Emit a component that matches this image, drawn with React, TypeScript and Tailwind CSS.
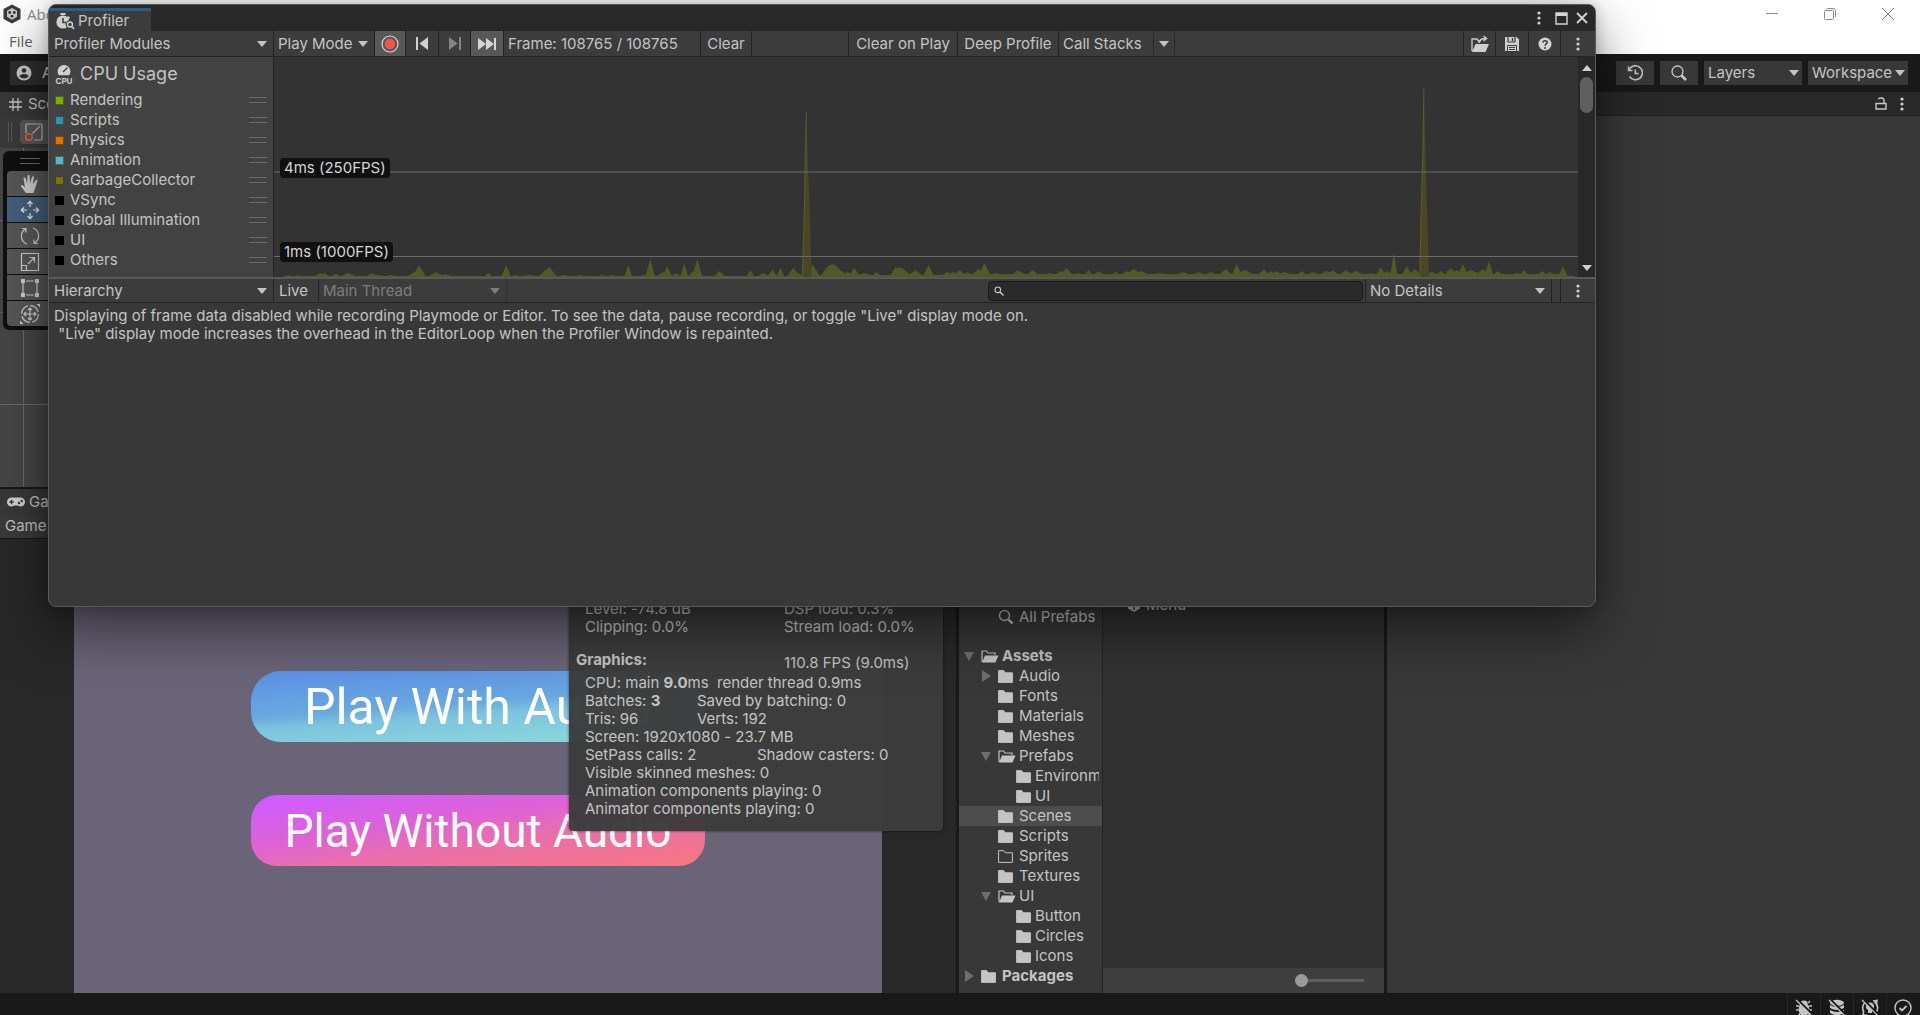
import React from "react";

const clsText = "text-[#c4c4c4]";

function Tri({ dir = "down", className = "" }: { dir?: "down" | "right" | "up"; className?: string }) {
  const d = dir === "down" ? "M0 0H10L5 6Z" : dir === "up" ? "M0 6H10L5 0Z" : "M0 0L9 6L0 12Z";
  return (
    <svg
      aria-hidden
      viewBox={dir === "right" ? "0 0 9 12" : "0 0 10 6"}
      preserveAspectRatio="none"
      className={`shrink-0 ${dir === "right" ? "h-3 w-[9px]" : "h-[6px] w-[10px]"} ${className}`}
      fill="currentColor"
    >
      <path d={d} />
    </svg>
  );
}

function Drop({
  label,
  name,
  className = "",
  arrow = "right-[6px]",
  pad = "pl-1",
  disabled = false,
}: {
  label: string;
  name: string;
  className?: string;
  arrow?: string;
  pad?: string;
  disabled?: boolean;
}) {
  return (
    <div className={`relative flex shrink-0 items-center ${disabled ? "text-[#7c7c7c]" : clsText} ${className}`}>
      <select
        aria-label={name}
        disabled={disabled}
        className={`h-full w-full appearance-none bg-transparent pr-4 outline-none ${pad}`}
      >
        <option>{label}</option>
      </select>
      <Tri className={`pointer-events-none absolute top-1/2 -translate-y-1/2 ${arrow}`} />
    </div>
  );
}

function Dots() {
  return (
    <svg aria-hidden viewBox="0 0 4 14" className="h-[14px] w-1" fill="#d0d0d0">
      <circle cx="2" cy="2" r="1.6" />
      <circle cx="2" cy="7" r="1.6" />
      <circle cx="2" cy="12" r="1.6" />
    </svg>
  );
}

function ToolBtn({
  label,
  className = "",
  children,
}: {
  label?: string;
  className?: string;
  children: React.ReactNode;
}) {
  return (
    <button
      aria-label={label}
      className={`flex h-full shrink-0 items-center justify-center border-r border-[#232323] ${className}`}
    >
      {children}
    </button>
  );
}

/* ---------- Profiler chart ---------- */

const peaks: [number, number, number][] = [
  [14, 2, 5], [24, 2, 4], [46, 4, 7], [50, 4, 6], [62, 3, 6], [74, 4, 9], [98, 4, 7], [105, 2, 9], [117, 2, 9],
  [145, 12, 7], [140, 5, 8], [162, 5, 9], [171, 3, 9], [200, 1, 14], [214, 4, 5], [232, 12, 5], [241, 2, 6],
  [255, 2, 12], [275, 10, 8], [271, 7, 7], [290, 2, 12], [306, 2, 8], [328, 2, 7], [338, 2, 8], [354, 12, 4],
  [370, 2, 8], [376, 18, 5], [393, 11, 5], [389, 5, 8], [402, 4, 6], [410, 14, 4], [423, 18, 5], [420, 7, 7],
  [445, 6, 6], [465, 1, 9], [476, 7, 4], [489, 4, 7], [498, 8, 5], [506, 9, 4], [519, 9, 7], [524, 4, 7],
  [537, 10, 5], [567, 6, 10], [573, 5, 10], [580, 9, 6], [590, 4, 12], [602, 5, 6], [621, 10, 6], [627, 8, 12],
  [641, 7, 9], [654, 12, 6], [673, 5, 9], [679, 5, 12], [685, 7, 8], [693, 5, 8], [710, 14, 7], [704, 8, 10],
  [722, 4, 16], [743, 7, 8], [746, 6, 7], [758, 7, 8], [775, 4, 12], [792, 9, 8], [786, 6, 9], [804, 4, 9],
  [814, 7, 6], [824, 6, 8], [841, 6, 5], [852, 6, 8], [859, 8, 12], [866, 6, 14], [885, 4, 18], [905, 4, 12],
  [909, 5, 12], [924, 5, 10], [936, 5, 10], [951, 8, 9], [962, 13, 6], [970, 7, 15], [989, 8, 8], [996, 6, 9],
  [1002, 6, 9], [1010, 5, 14], [1027, 6, 7], [1038, 5, 12], [1052, 6, 12], [1058, 7, 8], [1071, 7, 9],
  [1081, 6, 13], [1096, 4, 9], [1106, 10, 6], [1112, 6, 9], [1119, 24, 4], [1132, 11, 6], [1140, 8, 8],
  [1157, 6, 7], [1166, 6, 8], [1176, 9, 9], [1182, 7, 9], [1188, 13, 6], [1196, 7, 16], [1214, 16, 5],
  [1208, 8, 10], [1223, 6, 7], [1242, 4, 12], [1249, 7, 6], [1267, 6, 7], [1275, 5, 9], [1288, 11, 5],
];

function Chart() {
  const d = peaks.map(([x, h, w]) => `M${x - w} 219L${x} ${219 - h}L${x + w} 219Z`).join("");
  return (
    <svg
      role="img"
      aria-label="CPU usage chart"
      viewBox="0 0 1303 219"
      preserveAspectRatio="none"
      className="absolute inset-0 h-full w-full"
    >
      <g fill="#4f5a26">
        <path d={d} />
        <path d="M545 219L552 210Q557 204 562 208L572 219Z" />
        <path d="M615 219L620 211Q625 208 629 211L638 219Z" />
        <path d="M10 219V218H560V217H690L700 216H860L900 216L1000 216H1160L1200 216H1290V218H1300V219Z" />
        <path d="M536 215L538 206L546 219H536Z" />
      </g>
      <path d="M528 219L530 150L531 90L532 55L534 120L536 170L537 219Z" fill="#4b4724" />
      <path d="M1145 219L1146 165L1148 95L1149 30L1151 110L1153 180L1154 219Z" fill="#4b4724" />
      <path d="M528 219L530 150L531 90L532 55" fill="none" stroke="#58602a" />
      <path d="M1145 219L1146 165L1148 95L1149 30" fill="none" stroke="#58602a" />
      <path d="M0 114.5H1303M0 198.5H1303" stroke="#6b6b6b" />
    </svg>
  );
}

const modules: [string, string][] = [
  ["Rendering", "bg-[#82a80d]"],
  ["Scripts", "bg-[#3790ab]"],
  ["Physics", "bg-[#d87408]"],
  ["Animation", "bg-[#5fb3bd]"],
  ["GarbageCollector", "bg-[#77720f]"],
  ["VSync", "bg-black"],
  ["Global Illumination", "bg-black"],
  ["UI", "bg-black"],
  ["Others", "bg-black"],
];

function Profiler() {
  return (
    <section
      aria-label="Profiler"
      className="absolute top-1 right-[324px] bottom-[408px] left-12 z-20 flex flex-col overflow-hidden rounded-lg border border-[#5a5a5a] bg-[#383838] shadow-[0_22px_56px_rgba(0,0,0,0.52),0_0_14px_rgba(0,0,0,0.2)]"
    >
      <div className="flex h-[26px] shrink-0 items-end justify-between bg-[#282828]">
        <button className="flex h-[23px] w-[102px] items-center gap-[3px] border-t-3 border-[#2c5d87] bg-[#3c3c3c] pl-[6px]">
          <svg aria-hidden viewBox="0 0 20 18" className="h-[18px] w-5">
            <circle cx="8" cy="10" r="6.6" fill="#cfcfcf" />
            <path d="M5.5 1H10.5V3H5.5Z M13 4L15 5.5L14 7L12 5Z" fill="#cfcfcf" />
            <path d="M8 6V10.5H11" fill="none" stroke="#3c3c3c" strokeWidth="1.6" />
            <circle cx="15" cy="12.5" r="4.4" fill="#3c3c3c" />
            <circle cx="15" cy="12.5" r="2.5" fill="none" stroke="#cfcfcf" strokeWidth="1.4" />
            <path d="M17 14.5L19 17" stroke="#cfcfcf" strokeWidth="1.6" />
          </svg>
          <span>Profiler</span>
        </button>
        <div className="flex h-full items-center gap-2 pr-[7px]">
          <button aria-label="Window menu" className="flex w-4 justify-center"><Dots /></button>
          <button aria-label="Maximize">
            <svg viewBox="0 0 13 13" className="h-[13px] w-[13px]">
              <path d="M1 1H12V12H1Z" fill="none" stroke="#d4d4d4" strokeWidth="1.4" />
              <path d="M1 1H12V4H1Z" fill="#d4d4d4" />
            </svg>
          </button>
          <button aria-label="Close">
            <svg viewBox="0 0 12 12" className="h-3 w-3">
              <path d="M1 1L11 11M11 1L1 11" stroke="#d4d4d4" strokeWidth="1.8" />
            </svg>
          </button>
        </div>
      </div>

      <div className="flex h-[26px] shrink-0 items-stretch border-b border-[#232323] bg-[#3c3c3c]">
        <Drop name="Modules" label="Profiler Modules" pad="pl-[5px]" className="w-[225px] border-r border-[#232323]" />
        <Drop name="Target" label="Play Mode" className="w-[101px] border-r border-[#232323]" />
        <ToolBtn label="Record" className="w-[31px] bg-[#585858]">
          <svg viewBox="0 0 18 18" className="h-[18px] w-[18px]">
            <circle cx="9" cy="9" r="8" fill="none" stroke="#d8d8d8" strokeWidth="1.2" />
            <circle cx="9" cy="9" r="5.2" fill="#ff5045" />
          </svg>
        </ToolBtn>
        <ToolBtn label="Previous frame" className="w-[33px]">
          <svg viewBox="0 0 14 13" className="h-[13px] w-[14px]" fill="#d0d0d0">
            <path d="M1 0H3V13H1ZM13 0V13L4.500 6.500Z" />
          </svg>
        </ToolBtn>
        <ToolBtn label="Next frame" className="w-8">
          <svg viewBox="0 0 14 13" className="h-[13px] w-[14px]" fill="#858585">
            <path d="M11 0H13V13H11ZM1 0V13L9.500 6.500Z" />
          </svg>
        </ToolBtn>
        <ToolBtn label="Current frame" className="w-[33px] bg-[#585858]">
          <svg viewBox="0 0 18 12" className="h-3 w-[18px]" fill="#d6d6d6">
            <path d="M0 0V12L8 6ZM8 0V12L16 6ZM16 0H18V12H16Z" />
          </svg>
        </ToolBtn>
        <div className="flex w-[197px] shrink-0 items-center border-r border-[#232323] pl-1">Frame: 108765 / 108765</div>
        <ToolBtn className="w-[51px]">Clear</ToolBtn>
        <div className="w-[97px] shrink-0 border-r border-[#232323]" />
        <ToolBtn className="w-[109px]">Clear on Play</ToolBtn>
        <ToolBtn className="w-[101px]">Deep Profile</ToolBtn>
        <button className="w-[94px] shrink-0 pl-1 text-left">Call Stacks</button>
        <button
          aria-label="Call stack options"
          className="flex w-[22px] shrink-0 items-center justify-center border-r border-l border-[#2a2a2a]"
        >
          <Tri />
        </button>
        <div className="flex-1 border-r border-[#232323]" />
        <ToolBtn label="Load" className="w-8">
          <svg viewBox="0 0 20 18" className="h-[18px] w-5">
            <path d="M2 16V4H7L8.500 6H11" fill="none" stroke="#cfcfcf" strokeWidth="1.3" />
            <path d="M5.500 9H19L15.500 17H2Z" fill="#cfcfcf" />
            <path d="M9 8C9 4.500 12 3.500 16 3.500M13.500 1L16.500 3.500L13.500 6" fill="none" stroke="#cfcfcf" strokeWidth="1.5" />
          </svg>
        </ToolBtn>
        <ToolBtn label="Save" className="w-[33px]">
          <svg viewBox="0 0 16 16" className="h-4 w-4">
            <path d="M1 1H12.500L15 3.500V15H1Z" fill="#cfcfcf" />
            <path d="M4 1V6H11V1" fill="none" stroke="#3c3c3c" strokeWidth="1.2" />
            <path d="M3.500 15V9.500H12.500V15M5 11.500H11M5 13.500H11" fill="none" stroke="#3c3c3c" />
            <path d="M8.500 2V5" stroke="#3c3c3c" strokeWidth="1.4" />
          </svg>
        </ToolBtn>
        <ToolBtn label="Help" className="w-8">
          <svg viewBox="0 0 14 14" className="h-[14px] w-[14px]">
            <circle cx="7" cy="7" r="6.500" fill="#d4d4d4" />
            <path d="M5 5.600C5 3.200 9.200 3.200 9.200 5.500C9.200 7 7.100 7 7.100 8.700" fill="none" stroke="#3c3c3c" strokeWidth="1.600" />
            <circle cx="7.100" cy="10.900" r="1" fill="#3c3c3c" />
          </svg>
        </ToolBtn>
        <button aria-label="More" className="flex w-[34px] shrink-0 items-center justify-center"><Dots /></button>
      </div>

      <div className="flex h-[220px] shrink-0">
        <div className="flex w-[225px] shrink-0 flex-col border-r border-[#232323] bg-[#424242]">
          <div className="flex h-[33px] items-center gap-[7px] pl-[6px] text-lg">
            <svg aria-hidden viewBox="0 0 18 20" className="h-5 w-[18px]">
              <path d="M9 1A6.500 6.500 0 0 1 14.200 11.200H3.800A6.500 6.500 0 0 1 9 1Z" fill="#d0d0d0" />
              <path d="M8 8L12.500 3.500" stroke="#424242" strokeWidth="1.500" />
              <text x="9" y="19.500" textAnchor="middle" fontSize="8" fontWeight="700" fill="#d0d0d0">CPU</text>
            </svg>
            <h2>CPU Usage</h2>
          </div>
          <ul>
            {modules.map(([name, color]) => (
              <li key={name} className="flex h-5 items-center">
                <span className={`ml-[6px] h-[9px] w-[9px] border border-black/40 ${color}`} />
                <span className="ml-[6px] flex-1">{name}</span>
                <span className="mr-[6px] flex h-[6px] w-[18px] flex-col justify-between border-y border-[#6a6a6a]" />
              </li>
            ))}
          </ul>
        </div>
        <div className="relative flex-1 bg-[#333333]">
          <Chart />
          <span className="absolute top-[101px] left-[6px] flex h-5 items-center rounded bg-[#101010] px-1 text-[#d6d6d6]">
            4ms (250FPS)
          </span>
          <span className="absolute top-[185px] left-[6px] flex h-5 items-center rounded bg-[#101010] px-1 text-[#d6d6d6]">
            1ms (1000FPS)
          </span>
        </div>
        <div className="flex w-[17px] shrink-0 flex-col items-center gap-[6px] bg-[#282828] pt-2 pb-[6px] text-[#d0d0d0]">
          <Tri dir="up" />
          <div className="h-9 w-[13px] rounded-full bg-[#5f5f5f]" />
          <div className="flex-1" />
          <Tri />
        </div>
      </div>

      <div className="flex h-[26px] shrink-0 items-stretch border-t-2 border-b border-t-[#585858] border-b-[#232323] bg-[#3c3c3c]">
        <Drop name="View" label="Hierarchy" pad="pl-[5px]" className="w-[225px] border-r border-[#232323]" />
        <button className="w-[45px] shrink-0 border-r border-[#232323] pl-[5px] text-left">Live</button>
        <Drop
          name="Thread"
          label="Main Thread"
          disabled
          className="w-[188px] border-r border-[#303030]"
        />
        <div className="flex-1" />
        <label className="mr-[2px] flex h-5 w-[375px] items-center self-center rounded border border-[#191919] bg-[#2a2a2a] pl-[5px]">
          <svg aria-hidden viewBox="0 0 10 10" className="h-[10px] w-[10px]">
            <circle cx="3.800" cy="3.800" r="2.800" fill="none" stroke="#c8c8c8" strokeWidth="1.100" />
            <path d="M6 6L9.500 9.500" stroke="#c8c8c8" strokeWidth="1.500" />
          </svg>
          <input aria-label="Search" className="min-w-0 flex-1 bg-transparent px-1 outline-none" />
        </label>
        <Drop name="Details" label="No Details" className="w-[187px] border-x border-[#232323]" />
        <div className="w-[9px] border-r border-[#232323]" />
        <button aria-label="More" className="flex w-[34px] shrink-0 items-center justify-center"><Dots /></button>
      </div>
      <p className="pt-1 pl-[5px] leading-[18px]">
        Displaying of frame data disabled while recording Playmode or Editor. To see the data, pause recording, or toggle
        "Live" display mode on.
        <br />
        &nbsp;"Live" display mode increases the overhead in the EditorLoop when the Profiler Window is repainted.
      </p>
    </section>
  );
}

/* ---------- Scene tools ---------- */

const s = { fill: "none", stroke: "#d0d0d0", strokeWidth: 1.2 } as const;
const tools: { name: string; active?: boolean; icon: React.ReactNode }[] = [
  {
    name: "View",
    icon: (
      <path
        d="M6 19L1 12.500C0.500 11.500 2 10.800 3 11.600L5 13.500L3.600 4.500C3.500 3.200 5.200 3 5.600 4.200L7 9.500L7.500 2C7.600 0.700 9.500 0.700 9.600 2L10 9.300L12 3C12.400 1.800 14 2.200 13.900 3.500L12.800 10L16 6C16.800 5.200 18 6 17.500 7L13.500 19Z"
        fill="#d0d0d0"
      />
    ),
  },
  {
    name: "Move",
    active: true,
    icon: (
      <g {...s} stroke="#f0f0f0">
        <path d="M10 7V1.500M10 13V18.500M7 10H1.500M13 10H18.500" />
        <path d="M7.500 4L10 1.300L12.500 4M7.500 16L10 18.700L12.500 16M4 7.500L1.300 10L4 12.500M16 7.500L18.700 10L16 12.500" />
      </g>
    ),
  },
  {
    name: "Rotate",
    icon: (
      <g {...s}>
        <path d="M7 18A8.300 8.300 0 0 1 5.500 3M13 2A8.300 8.300 0 0 1 14.500 17" />
        <path d="M2 2.500H6V6.500M18 17.500H14V13.500" />
      </g>
    ),
  },
  {
    name: "Scale",
    icon: (
      <g {...s}>
        <path d="M1.500 1.500H18.500V18.500H1.500ZM1.500 13.500H6.500V18.500M8 12L14 6M9.500 5.500H14.500V10.500" />
      </g>
    ),
  },
  {
    name: "Rect",
    icon: (
      <g {...s}>
        <path d="M3 5V15M17 5V15M6 3H14M6 17H14" />
        <path
          d="M1 1H5V5H1ZM15 1H19V5H15ZM1 15H5V19H1ZM15 15H19V19H15Z"
          fill="#d0d0d0"
          stroke="none"
        />
      </g>
    ),
  },
  {
    name: "Transform",
    icon: (
      <g {...s}>
        <circle cx="10" cy="10" r="8.300" strokeDasharray="10.800 2.240" />
        <path d="M10 4V16M4 10H16M8 6L10 4L12 6M8 14L10 16L12 14M6 8L4 10L6 12M14 8L16 10L14 12" />
        <path d="M16.500 0H20V3.500ZM3.500 20H0V16.500Z" fill="#d0d0d0" stroke="none" />
      </g>
    ),
  },
];

function Scene() {
  return (
    <section aria-label="Scene" className="flex h-[395px] shrink-0 flex-col bg-[#464646]">
      <div className="flex h-6 shrink-0 items-center gap-[6px] bg-[#383838] pl-[9px]">
        <svg aria-hidden viewBox="0 0 13 13" className="h-[13px] w-[13px]">
          <path d="M4 0V13M9 0V13M0 4H13M0 9H13" stroke="#c4c4c4" strokeWidth="1.300" />
        </svg>
        <span>Sce</span>
      </div>
      <div className="flex h-8 shrink-0 items-center bg-[#3a3a3a] pl-[8px]">
        <span className="h-5 w-1 border-x border-[#5a5a5a]" />
        <button aria-label="Tool settings" className="ml-2 flex h-6 w-10 items-center rounded-sm bg-[#565656] pl-[5px]">
          <svg viewBox="0 0 18 18" className="h-[18px] w-[18px]" fill="none">
            <path d="M1 10V2Q1 1 2 1H16Q17 1 17 2V16Q17 17 16 17H9M7.500 10.500L15 3" stroke="#b8b8b8" strokeWidth="1.200" />
            <circle cx="4" cy="14" r="3.200" stroke="#e0603f" strokeWidth="1.500" />
          </svg>
        </button>
      </div>
      <div className="relative flex-1 overflow-hidden">
        <div className="absolute top-0 bottom-0 left-[23px] w-px bg-[#6a6a6a]" />
        <div className="absolute top-[72px] h-px w-full bg-[#6a6a6a]" />
        <div className="absolute top-[164px] h-px w-full bg-[#5f5f5f]" />
        <div className="absolute top-[256px] h-px w-full bg-[#6a6a6a]" />
        <div className="absolute top-[3px] left-[3px] w-16 rounded-md bg-[#101010] pb-1 pl-1">
          <div className="flex h-5 items-center pl-[13px]">
            <span className="h-[6px] w-5 border-y border-[#6a6a6a]" />
          </div>
          <div className="flex flex-col gap-px overflow-hidden rounded">
            {tools.map((t) => (
              <button
                key={t.name}
                aria-label={t.name}
                className={`flex h-[25px] items-center pl-[13px] ${t.active ? "bg-[#46607c]" : "bg-[#585858]"}`}
              >
                <svg viewBox="0 0 20 20" className="h-5 w-5">{t.icon}</svg>
              </button>
            ))}
          </div>
        </div>
      </div>
    </section>
  );
}

/* ---------- Game ---------- */

function Stats() {
  return (
    <div className="absolute right-[13px] bottom-[162px] w-[374px] rounded bg-[#3c3c3c]/97 pb-[13px] pl-4 leading-[18px] shadow-[0_0_3px_rgba(0,0,0,0.6)]">
      <div className="grid grid-cols-[199px_1fr]">
        <div>
          <p>Level: -74.8 dB</p>
          <p>Clipping: 0.0%</p>
        </div>
        <div>
          <p>DSP load: 0.3%</p>
          <p>Stream load: 0.0%</p>
        </div>
      </div>
      <div className="mt-[15px] -ml-[9px] grid h-[23px] grid-cols-[208px_1fr] pb-[2px]">
        <h3 className="font-bold">Graphics:</h3>
        <p className="self-end">110.8 FPS (9.0ms)</p>
      </div>
      <p>
        CPU: main <b>9.0</b>ms&nbsp; render thread 0.9ms
      </p>
      <div className="grid grid-cols-[112px_1fr]">
        <p>
          Batches: <b>3</b>
        </p>
        <p>Saved by batching: 0</p>
        <p>Tris: 96</p>
        <p>Verts: 192</p>
      </div>
      <p>Screen: 1920x1080 - 23.7 MB</p>
      <div className="grid grid-cols-[172px_1fr]">
        <p>SetPass calls: 2</p>
        <p>Shadow casters: 0</p>
      </div>
      <p>Visible skinned meshes: 0</p>
      <p>Animation components playing: 0</p>
      <p>Animator components playing: 0</p>
    </div>
  );
}

function Game() {
  return (
    <section aria-label="Game" className="flex min-h-0 flex-1 flex-col border-t-2 border-[#191919] bg-[#282828]">
      <div className="flex h-[25px] shrink-0 items-center gap-1 bg-[#383838] pl-[7px]">
        <svg aria-hidden viewBox="0 0 18 10" className="h-[10px] w-[18px]">
          <path d="M4.500 0.500H13.500A4.500 4.500 0 0 1 13.500 9.500C12 9.500 11.500 8.500 10.500 8.500H7.500C6.500 8.500 6 9.500 4.500 9.500A4.500 4.500 0 0 1 4.500 0.500Z" fill="#d0d0d0" />
          <path d="M4.500 2.800V7.200M2.300 5H6.700" stroke="#353535" strokeWidth="1.300" />
          <circle cx="12" cy="6" r="1.200" fill="#353535" />
          <circle cx="14.800" cy="4" r="1.200" fill="#353535" />
        </svg>
        <span>Game</span>
      </div>
      <div className="flex h-[25px] shrink-0 items-center border-b border-[#191919] bg-[#3a3a3a] pl-[5px]">Game</div>
      <div className="relative flex min-h-0 flex-1 justify-center">
        <div className="flex aspect-video h-full flex-col items-center gap-[53px] bg-[#696477] pt-[132px] font-['Roboto'] text-white">
          <button className="h-[71px] w-[454px] rounded-[30px] bg-linear-[176deg,#5f93e8_5%,#68a8df_45%,#7cc4de_58%,#8ed9da_95%] text-[50px]">
            Play With Audio
          </button>
          <button className="h-[71px] w-[454px] rounded-[26px] bg-linear-[172deg,#ce5cff_5%,#df63d2_40%,#ea6fab_60%,#f57585_95%] text-[46px]">
            Play Without Audio
          </button>
        </div>
        <Stats />
      </div>
    </section>
  );
}

/* ---------- Project ---------- */

function Folder({ kind }: { kind: "full" | "open" | "empty" }) {
  if (kind === "open")
    return (
      <svg aria-hidden viewBox="0 0 18 13" className="h-[13px] w-[18px] shrink-0">
        <path d="M1 12V1H5.500L7 3H14V5" fill="none" stroke="#c4c4c4" strokeWidth="1.200" />
        <path d="M4 5.500H17.500L14.500 12.500H1Z" fill="#c4c4c4" />
      </svg>
    );
  return (
    <svg aria-hidden viewBox="0 0 15 13" className="h-[13px] w-[15px] shrink-0">
      <path
        d="M0.600 0.600H5.500L7.300 2.800H14.400V12.400H0.600Z"
        fill={kind === "full" ? "#c4c4c4" : "none"}
        stroke="#c4c4c4"
        strokeWidth="1"
      />
    </svg>
  );
}

type Row = [name: string, level: 0 | 1 | 2, kind: "full" | "open" | "empty", arrow?: "down" | "right"];
const rows: Row[] = [
  ["Assets", 0, "open", "down"],
  ["Audio", 1, "full", "right"],
  ["Fonts", 1, "full"],
  ["Materials", 1, "full"],
  ["Meshes", 1, "full"],
  ["Prefabs", 1, "open", "down"],
  ["Environm", 2, "full"],
  ["UI", 2, "full"],
  ["Scenes", 1, "full"],
  ["Scripts", 1, "full"],
  ["Sprites", 1, "empty"],
  ["Textures", 1, "full"],
  ["UI", 1, "open", "down"],
  ["Button", 2, "full"],
  ["Circles", 2, "full"],
  ["Icons", 2, "full"],
  ["Packages", 0, "full", "right"],
];
const indent = ["pl-[5px]", "pl-[22px]", "pl-[40px]"];

function Project() {
  return (
    <section aria-label="Project" className="flex min-h-0 border-x-3 border-[#191919] bg-[#383838]">
      <div className="flex w-36 shrink-0 flex-col justify-end overflow-hidden border-r border-[#232323] pb-[7px]">
        <div className="mb-[19px] flex h-5 items-center gap-[5px] pl-[39px]">
          <svg aria-hidden viewBox="0 0 16 16" className="h-4 w-4">
            <circle cx="6.500" cy="6.500" r="5" fill="none" stroke="#c4c4c4" strokeWidth="1.300" />
            <path d="M10.500 10.500L14.500 14.500" stroke="#c4c4c4" strokeWidth="2.400" />
          </svg>
          <span className="whitespace-nowrap">All Prefabs</span>
        </div>
        <ul role="tree">
          {rows.map(([name, level, kind, arrow], i) => (
            <li
              key={i}
              role="treeitem"
              aria-selected={name === "Scenes"}
              className={`flex h-5 items-center pr-[3px] ${indent[level]} ${name === "Scenes" ? "bg-[#4d4d4d]" : ""} ${
                level === 0 ? "font-bold" : ""
              }`}
            >
              <span className="flex w-[17px] shrink-0 items-center text-[#6e6e6e]">
                {arrow && <Tri dir={arrow} className={arrow === "down" ? "h-[9px]!" : "ml-px"} />}
              </span>
              <span className={`flex shrink-0 items-center ${level === 2 ? "w-[19px]" : "w-[21px]"}`}>
                <Folder kind={kind} />
              </span>
              <span className="min-w-0 overflow-hidden whitespace-nowrap">{name}</span>
            </li>
          ))}
        </ul>
      </div>
      <div className="flex min-w-0 flex-1 flex-col bg-[#323232]">
        <div className="flex flex-1 items-start pt-[503px] pl-[24px]">
          <div className="flex h-5 items-center gap-[5px]">
            <svg aria-hidden viewBox="0 0 14 14" className="h-[14px] w-[14px]">
              <path d="M7 0L13 3.500V10.500L7 14L1 10.500V3.500Z" fill="#c4c4c4" />
              <path d="M7 7V12M7 7L2 4M7 7L12 4" stroke="#323232" strokeWidth="1.400" />
            </svg>
            <span>Menu</span>
          </div>
        </div>
        <div className="flex h-[25px] shrink-0 items-center justify-end bg-[#3e3e3e] pr-5">
          <input
            type="range"
            aria-label="Icon size"
            defaultValue={0}
            className="h-3 w-[69px] appearance-none bg-transparent [&::-webkit-slider-runnable-track]:h-[3px] [&::-webkit-slider-runnable-track]:bg-[#5e5e5e] [&::-webkit-slider-thumb]:-mt-[5px] [&::-webkit-slider-thumb]:h-[13px] [&::-webkit-slider-thumb]:w-[13px] [&::-webkit-slider-thumb]:appearance-none [&::-webkit-slider-thumb]:rounded-full [&::-webkit-slider-thumb]:bg-[#999999]"
          />
        </div>
      </div>
    </section>
  );
}

function Inspector() {
  return (
    <section aria-label="Inspector" className="bg-[#383838]">
      <div className="flex h-6 items-center justify-end gap-[13px] border-b border-[#202020] bg-[#282828] pr-4">
        <button aria-label="Lock">
          <svg viewBox="0 0 12 13" className="h-[13px] w-3" fill="none" stroke="#c8c8c8" strokeWidth="1.400">
            <path d="M1 6.500H11V12H1ZM9 6.500V3.500Q9 1 6 1Q4 1 3.200 2.200" />
          </svg>
        </button>
        <button aria-label="Inspector menu"><Dots /></button>
      </div>
    </section>
  );
}

/* ---------- Chrome ---------- */

function TitleBar() {
  return (
    <header className="flex h-[54px] shrink-0 flex-col bg-white font-['Open_Sans']">
      <div className="flex h-7 items-center justify-between pr-[26px] pl-[3px]">
        <div className="flex items-center gap-[6px] text-[15px] text-[#8a8a8a]">
          <svg aria-hidden viewBox="0 0 18 20" className="h-5 w-[18px]">
            <path d="M9 0.500L17.500 5V15L9 19.500L0.500 15V5Z" fill="#3a3a3a" />
            <path d="M9 4L14 6.800V12.800L9 15.800L4 12.800V6.800Z" fill="#c9c9c9" />
            <circle cx="6.700" cy="8.500" r="1.400" fill="#333" />
            <circle cx="11.300" cy="8.500" r="1.400" fill="#333" />
            <circle cx="9" cy="12.200" r="1.400" fill="#333" />
          </svg>
          <span>Abo</span>
        </div>
        <div className="flex items-center gap-[46px]">
          <button aria-label="Minimize">
            <svg viewBox="0 0 12 12" className="h-3 w-3"><path d="M0 5.500H12" stroke="#8a8a8a" /></svg>
          </button>
          <button aria-label="Restore">
            <svg viewBox="0 0 12 12" className="h-3 w-3" fill="none" stroke="#8a8a8a">
              <rect x="0.500" y="2.500" width="9" height="9" rx="1" />
              <path d="M2.500 1Q3 0.500 4 0.500H9Q11.500 0.500 11.500 3V8Q11.500 9 11 9.500" />
            </svg>
          </button>
          <button aria-label="Close">
            <svg viewBox="0 0 12 12" className="h-3 w-3"><path d="M0 0L12 12M12 0L0 12" stroke="#8a8a8a" /></svg>
          </button>
        </div>
      </div>
      <nav className="flex flex-1 items-center pl-[9px] text-[15px] text-[#606060]">
        <button>File</button>
      </nav>
    </header>
  );
}

function TopBar() {
  return (
    <div className="flex h-[38px] shrink-0 items-center justify-between bg-[#191919] pr-3 pl-[10px]">
      <button className="flex h-6 items-center gap-[10px] bg-[#2e2e2e] pr-4 pl-[6px]">
        <svg aria-hidden viewBox="0 0 16 16" className="h-4 w-4">
          <circle cx="8" cy="8" r="7.500" fill="#c8c8c8" />
          <circle cx="8" cy="5.500" r="2.300" fill="#2e2e2e" />
          <path d="M3.500 11.500Q3.500 9 8 9Q12.500 9 12.500 11.500Q10.500 13.500 8 13.500Q5.500 13.500 3.500 11.500Z" fill="#2e2e2e" />
        </svg>
        A
      </button>
      <div className="flex gap-[6px]">
        <button aria-label="Undo history" className="flex h-6 w-[38px] items-center justify-center bg-[#383838]">
          <svg viewBox="0 0 16 16" className="h-4 w-4" fill="none" stroke="#c8c8c8" strokeWidth="1.500">
            <path d="M2 5A7 7 0 1 1 2.500 11.500M1.500 1.500V5.500H5.500M8.300 4.500V8.500H11.500" />
          </svg>
        </button>
        <button aria-label="Search" className="flex h-6 w-[38px] items-center justify-center bg-[#383838]">
          <svg viewBox="0 0 16 16" className="h-4 w-4">
            <circle cx="6.500" cy="6.500" r="5.500" fill="none" stroke="#c8c8c8" strokeWidth="1.300" />
            <path d="M10.500 10.500L15 15" stroke="#c8c8c8" strokeWidth="2.600" />
          </svg>
        </button>
        <Drop name="Layers" label="Layers" arrow="right-[3px]" className="h-6 w-[98px] bg-[#383838]" />
        <Drop name="Workspace" label="Workspace" arrow="right-[3px]" className="h-6 w-[100px] bg-[#383838]" />
      </div>
    </div>
  );
}

function StatusBar() {
  const cell = "flex h-full w-[33px] items-start justify-center border-l border-[#262626] pt-[6px]";
  return (
    <footer className="flex h-[22px] shrink-0 justify-end overflow-hidden bg-[#191919] pr-px">
      <button aria-label="Debugger" className={cell}>
        <svg viewBox="0 0 18 18" className="h-[18px] w-[18px]">
          <path d="M5.500 5Q5 1.500 9 1.500Q13 1.500 12.500 5Q14.500 7 14.500 10.500Q14 16.500 9 16.500Q4 16.500 3.500 10.500Q3.500 7 5.500 5Z" fill="#c4c4c4" />
          <path d="M5 4L3 2M13 4L15 2M4 7H1M14 7H17M3.500 11H1M14.500 11H17M5 14.500L3 17M13 14.500L15 17" stroke="#c4c4c4" strokeWidth="1.300" />
          <path d="M2 0L18 16" stroke="#191919" strokeWidth="2" />
          <path d="M1 1L17 17" stroke="#c4c4c4" strokeWidth="1.200" />
        </svg>
      </button>
      <button aria-label="Cache server" className={cell}>
        <svg viewBox="0 0 18 18" className="h-[18px] w-[18px]">
          <ellipse cx="9" cy="3.800" rx="7" ry="3" fill="#c4c4c4" />
          <path d="M2 6Q9 10 16 6V9Q9 13 2 9ZM2 11Q9 15 16 11V14Q9 18.500 2 14Z" fill="#c4c4c4" />
          <path d="M2 0L18 16" stroke="#191919" strokeWidth="2" />
          <path d="M1 1L17 17" stroke="#c4c4c4" strokeWidth="1.200" />
        </svg>
      </button>
      <button aria-label="Auto lighting" className={cell}>
        <svg viewBox="0 0 18 18" className="h-[18px] w-[18px]">
          <path d="M3 13A7.200 7.200 0 0 1 4 3.500M15 13.500A7.200 7.200 0 0 0 13.500 3M12 2L16 1.500L15.500 5.500M6 16L2 16.500L2.500 12.500" fill="none" stroke="#c4c4c4" strokeWidth="1.600" />
          <path d="M9 3.500A4 4 0 0 1 11 11V14H7V11A4 4 0 0 1 9 3.500Z" fill="#c4c4c4" />
          <path d="M2 0L18 16" stroke="#191919" strokeWidth="2" />
          <path d="M1 1L17 17" stroke="#c4c4c4" strokeWidth="1.200" />
        </svg>
      </button>
      <button aria-label="Progress" className={cell}>
        <svg viewBox="0 0 18 18" className="h-[18px] w-[18px]" fill="none" stroke="#c4c4c4" strokeWidth="1.400">
          <circle cx="9" cy="9" r="8" />
          <path d="M5.500 9L8 11.500L12.500 7" strokeWidth="1.800" />
        </svg>
      </button>
    </footer>
  );
}

export default function App() {
  return (
    <div
      className={`relative flex h-screen min-h-[900px] flex-col overflow-hidden bg-[#191919] font-['Inter',sans-serif] text-[15px] leading-5 [font-feature-settings:'calt'_0] ${clsText}`}
    >
      <TitleBar />
      <TopBar />
      <main className="grid min-h-0 flex-1 grid-cols-[956fr_431fr_533fr]">
        <div className="flex min-h-0 flex-col">
          <Scene />
          <Game />
        </div>
        <Project />
        <Inspector />
      </main>
      <StatusBar />
      <Profiler />
    </div>
  );
}
